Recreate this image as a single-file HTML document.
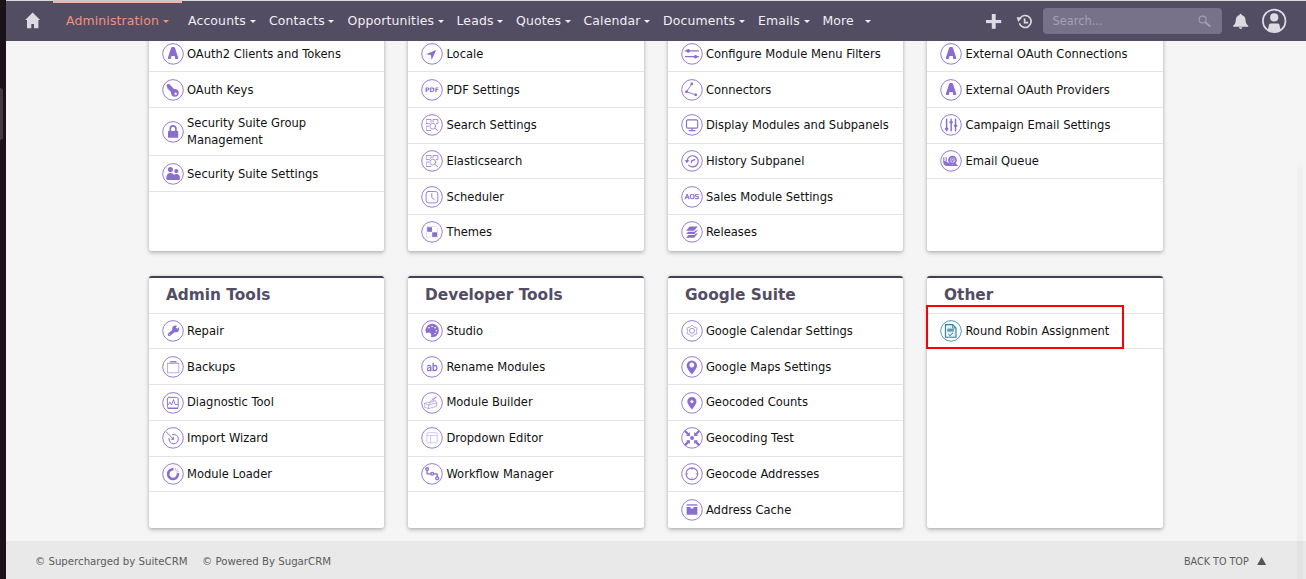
<!DOCTYPE html>
<html><head><meta charset="utf-8"><title>Administration</title>
<style>
*{box-sizing:border-box;margin:0;padding:0}
html,body{width:1306px;height:579px;overflow:hidden;background:#f5f5f5;font-family:"DejaVu Sans","Liberation Sans",sans-serif;color:#111}
.abs{position:absolute}
#strip{left:0;top:0;width:6px;height:579px;background:#1b1118;z-index:5}
#strip i{position:absolute;left:0;top:88px;width:3px;height:52px;background:#433a41;border-radius:0 3px 3px 0}
#topline{left:6px;top:0;width:1300px;height:1px;background:#d9d9d7;z-index:5}
#topline i{position:absolute;left:47px;top:0;width:129px;height:1px;background:#c5cccc}
#nav{left:6px;top:1px;width:1300px;height:40px;background:#534d64;color:#f0eff3;font-size:12.44px;letter-spacing:.135px;z-index:4}
#nav .pink{position:absolute;left:47px;top:0;width:129px;height:2px;background:#fbb0a3}
#nav span.m{position:absolute;top:1px;line-height:38px;white-space:nowrap}
#nav span.m.act{color:#f39079}
#nav i.c{position:absolute;top:18.5px;width:0;height:0;border-left:3px solid transparent;border-right:3px solid transparent;border-top:3.4px solid #f0eff3}
#nav i.c.act{border-top-color:#f39079}
#nav svg{position:absolute}
#search{position:absolute;left:1037px;top:7px;width:179px;height:26px;border-radius:4px;background:#77718a;color:#a5a0b3;font-size:11.4px;letter-spacing:0;line-height:27px;padding-left:9.5px}
.card{position:absolute;background:#fff;border-radius:2.5px;box-shadow:0 2px 4px rgba(0,0,0,.23),0 0 3px rgba(0,0,0,.13);z-index:1}
.card.h{border-top:2px solid #443f59;border-radius:2.5px}
.card h2{position:absolute;left:17px;top:5px;font-size:15.35px;font-weight:bold;color:#534d64;line-height:24px;white-space:nowrap}
.row{position:absolute;left:0;right:0;border-bottom:1px solid #e1e5ea;display:flex;align-items:center;padding-left:13px;font-size:11.53px;white-space:nowrap}
.row.nb{border-bottom:0}
.row.t{white-space:normal;line-height:17px}
.row svg{width:22px;height:22px;flex:none;margin-right:3.4px;position:relative;top:.5px}
.c0 .row svg{margin-right:3px}.c2 .row svg{margin-right:2.9px}
.row svg.tx{will-change:transform}
.hl{position:absolute;border-bottom:1px solid #e1e5ea;left:0;right:0;height:1px}
#red{left:926px;top:305px;width:198px;height:44px;border:2px solid #f00;z-index:3}
#sb{left:1297px;top:167px;width:6px;height:412px;background:rgba(0,0,0,.022);border-radius:3px 3px 0 0;z-index:6}
#footer{left:6px;top:541px;width:1300px;height:38px;background:#e9e9e9;color:#5c5c5c;font-size:10.2px;z-index:2}
#footer span{position:absolute;top:2px;line-height:38px;white-space:nowrap}
</style></head><body>
<div id="strip" class="abs"><i></i></div>
<div id="topline" class="abs"><i></i></div>
<div id="nav" class="abs">
<div class="pink"></div>
<svg style="left:0;top:0" width="60" height="40" viewBox="6 1 60 40"><path fill="#dddbe2" d="M32.6 12.6 L40.1 20 L38.4 20 L38.4 28.2 L34 28.2 L34 23.9 L31.3 23.9 L31.3 28.2 L27 28.2 L27 20 L25.2 20 Z"/></svg>
<span class="m act" style="left:60px">Administration</span><i class="c act" style="left:157.3px"></i>
<span class="m" style="left:182px">Accounts</span><i class="c" style="left:244.0px"></i>
<span class="m" style="left:263px">Contacts</span><i class="c" style="left:322.2px"></i>
<span class="m" style="left:341.5px">Opportunities</span><i class="c" style="left:431.9px"></i>
<span class="m" style="left:450.5px">Leads</span><i class="c" style="left:491.0px"></i>
<span class="m" style="left:510px">Quotes</span><i class="c" style="left:559.1px"></i>
<span class="m" style="left:577.5px">Calendar</span><i class="c" style="left:637.9px"></i>
<span class="m" style="left:657px">Documents</span><i class="c" style="left:733.0px"></i>
<span class="m" style="left:752px">Emails</span><i class="c" style="left:798.0px"></i>
<span class="m" style="left:816.5px">More</span><i class="c" style="left:859.0px"></i>
<svg style="left:970px;top:0" width="80" height="40" viewBox="976 1 80 40">
<rect x="986" y="20" width="15.2" height="3.1" fill="#dddbe2"/><rect x="991.8" y="14" width="3.9" height="14.8" fill="#dddbe2"/>
<path d="M1020.3 17.9 A6 6 0 1 1 1019.4 23.2" fill="none" stroke="#dddbe2" stroke-width="1.6"/>
<path d="M1016.7 16.9 L1021.9 17.7 L1018.2 21.9 Z" fill="#dddbe2"/>
<path d="M1024.6 18.6 L1024.6 22.6 L1028.2 22.6" fill="none" stroke="#dddbe2" stroke-width="1.7"/>
</svg>
<div id="search">Search...</div>
<svg style="left:1184px;top:0" width="116" height="40" viewBox="1190 1 116 40">
<circle cx="1202.6" cy="19.6" r="3.5" fill="none" stroke="#a39eb1" stroke-width="1.1"/><path d="M1205.3 22.2 L1209.8 26" stroke="#a39eb1" stroke-width="1.9" stroke-linecap="round"/>
<path fill="#dddbe2" d="M1240.6 13.7 Q1241.6 13.7 1241.7 14.9 Q1245.3 15.9 1245.5 20 Q1245.7 24.2 1248.2 25.6 L1248.2 26.7 L1233.2 26.7 L1233.2 25.6 Q1235.6 24.2 1235.8 20 Q1236 15.9 1239.5 14.9 Q1239.6 13.7 1240.6 13.7 Z M1238.9 27.3 L1242.4 27.3 Q1242.2 29 1240.6 29 Q1239.1 29 1238.9 27.3 Z"/>
<defs><clipPath id="uc"><circle cx="1274.2" cy="20.9" r="11"/></clipPath></defs>
<circle cx="1274.2" cy="20.9" r="11.3" fill="none" stroke="#dddbe2" stroke-width="1.7"/>
<circle cx="1274.2" cy="17.4" r="4.1" fill="#dddbe2"/>
<path clip-path="url(#uc)" fill="#dddbe2" d="M1270.6 23.4 L1277.8 23.4 Q1279 23.4 1279.3 24.6 L1281.6 34 L1266.8 34 L1269.1 24.6 Q1269.4 23.4 1270.6 23.4 Z"/>
</svg>
</div>
<div class="card c0" style="left:149px;top:20px;width:235px;height:231px">
<div class="row " style="top:16px;height:36px"><svg viewBox="0 0 22 22" width="22" height="22"><circle cx="11" cy="10.9" r="10.3" fill="#fff" stroke="#8a6dd0" stroke-width=".9"/><g fill="#8a6dd0" stroke="none"><path d="M8.9 5.4 Q9.3 4.1 10.4 4.1 L11.7 4.1 Q12.8 4.1 13.2 5.4 L16.2 14.7 Q16.6 16.1 15.2 16.1 L14.3 16.1 Q13.3 16.1 13.1 15.2 L12.7 13.1 L9.4 13.1 L9 15.2 Q8.8 16.1 7.8 16.1 L6.9 16.1 Q5.5 16.1 5.9 14.7 Z"/></g></svg><span>OAuth2 Clients and Tokens</span></div>
<div class="row " style="top:52px;height:36px"><svg viewBox="0 0 22 22" width="22" height="22"><circle cx="11" cy="10.9" r="10.3" fill="#fff" stroke="#8a6dd0" stroke-width=".9"/><g fill="#8a6dd0" stroke="none"><path fill-rule="evenodd" d="M4.5 6.4 Q5.4 4.3 7.6 5.2 L12 10 A3.9 3.9 0 1 1 9 13.4 L8.6 12.2 L7.5 12.2 L7.6 10.8 L6.3 10.9 L6.4 9.5 L5.1 9.5 L5.2 8.2 Z M13.6 13.5 A1.2 1.2 0 1 0 13.6 15.9 A1.2 1.2 0 1 0 13.6 13.5 Z"/></g></svg><span>OAuth Keys</span></div>
<div class="row t" style="top:88px;height:48px"><svg viewBox="0 0 22 22" width="22" height="22"><circle cx="11" cy="10.9" r="10.3" fill="#fff" stroke="#8a6dd0" stroke-width=".9"/><g fill="#8a6dd0" stroke="none"><path d="M6 10.6 Q6 10 6.6 10 L15.6 10 Q16.2 10 16.2 10.6 L16.2 16.2 Q16.2 16.8 15.6 16.8 L6.6 16.8 Q6 16.8 6 16.2 Z"/><path d="M8.3 10.2 L8.3 7.6 A2.8 2.8 0 0 1 13.9 7.6 L13.9 10.2" fill="none" stroke="#8a6dd0" stroke-width="1.7"/></g></svg><span>Security Suite Group<br>Management</span></div>
<div class="row " style="top:136px;height:36px"><svg viewBox="0 0 22 22" width="22" height="22"><circle cx="11" cy="10.9" r="10.3" fill="#fff" stroke="#8a6dd0" stroke-width=".9"/><g fill="#8a6dd0" stroke="none"><circle cx="8.4" cy="6.5" r="2.55"/><circle cx="14.3" cy="8.1" r="2.05"/><path d="M4.3 15.6 Q4.3 10.1 8.4 10.1 Q11 10.1 12.1 11.8 Q13 11.1 14.3 11.1 Q18 11.1 18 15.6 Q18 16.9 16.8 16.9 L5.5 16.9 Q4.3 16.9 4.3 15.6 Z"/></g></svg><span>Security Suite Settings</span></div>
</div>
<div class="card c1" style="left:408px;top:20px;width:236px;height:231px">
<div class="row " style="top:16px;height:36px"><svg viewBox="0 0 22 22" width="22" height="22"><circle cx="11" cy="10.9" r="10.3" fill="#fff" stroke="#8a6dd0" stroke-width=".9"/><g fill="#8a6dd0" stroke="none"><path d="M15.2 6.9 L4.9 11.2 L9.9 12 L10.6 16.9 Z"/></g></svg><span>Locale</span></div>
<div class="row " style="top:52px;height:36px"><svg class="tx" viewBox="0 0 22 22" width="22" height="22"><circle cx="11" cy="10.9" r="10.3" fill="#fff" stroke="#8a6dd0" stroke-width=".9"/><g fill="#8a6dd0" stroke="none"><text x="11" y="13.3" font-family="DejaVu Sans,sans-serif" font-weight="bold" font-size="6.3" text-anchor="middle" textLength="14.2" lengthAdjust="spacingAndGlyphs" fill="#8a6dd0">PDF</text></g></svg><span>PDF Settings</span></div>
<div class="row " style="top:88px;height:36px"><svg style="top:-0.6000000000000001px;left:0px" viewBox="0 0 22 22" width="22" height="22"><circle cx="11" cy="10.9" r="10.3" fill="#fff" stroke="#8a6dd0" stroke-width=".9"/><g fill="#8a6dd0" stroke="none"><g fill="none" stroke="#8a6dd0" stroke-width="0.8" stroke-linecap="round" stroke-linejoin="round" opacity=".9"><rect x="5.5" y="5.5" width="4.5" height="4.1"/><rect x="12.4" y="5.5" width="4.5" height="4.1"/><rect x="5.5" y="12.2" width="4.5" height="4.3"/><circle cx="11.8" cy="12.2" r="3.9" fill="#fff" stroke="none"/><circle cx="11.8" cy="12.2" r="2.9" fill="#fff" stroke-width=".75"/><path d="M14 14.3 L16.7 16.8"/></g></g></svg><span style="position:relative;top:-1px">Search Settings</span></div>
<div class="row " style="top:124px;height:35px"><svg style="top:-0.4px;left:0px" viewBox="0 0 22 22" width="22" height="22"><circle cx="11" cy="10.9" r="10.3" fill="#fff" stroke="#8a6dd0" stroke-width=".9"/><g fill="#8a6dd0" stroke="none"><g fill="none" stroke="#8a6dd0" stroke-width="0.8" stroke-linecap="round" stroke-linejoin="round" opacity=".9"><rect x="5.5" y="5.5" width="4.5" height="4.1"/><rect x="12.4" y="5.5" width="4.5" height="4.1"/><rect x="5.5" y="12.2" width="4.5" height="4.3"/><circle cx="11.8" cy="12.2" r="3.9" fill="#fff" stroke="none"/><circle cx="11.8" cy="12.2" r="2.9" fill="#fff" stroke-width=".75"/><path d="M14 14.3 L16.7 16.8"/></g></g></svg><span>Elasticsearch</span></div>
<div class="row " style="top:159px;height:36px"><svg viewBox="0 0 22 22" width="22" height="22"><circle cx="11" cy="10.9" r="10.3" fill="#fff" stroke="#8a6dd0" stroke-width=".9"/><g fill="#8a6dd0" stroke="none"><g fill="none" stroke="#8a6dd0" stroke-width="0.85" stroke-linecap="round" stroke-linejoin="round"><rect x="5.1" y="5.5" width="11.7" height="11.4" rx="2.2"/><path d="M10.8 7.7 L10.8 11.6 L13.3 13.5"/></g></g></svg><span>Scheduler</span></div>
<div class="row nb" style="top:195px;height:36px"><svg style="top:-0.8px;left:0px" viewBox="0 0 22 22" width="22" height="22"><circle cx="11" cy="10.9" r="10.3" fill="#fff" stroke="#8a6dd0" stroke-width=".9"/><g fill="#8a6dd0" stroke="none"><rect x="5.7" y="5.7" width="10.5" height="10.3" fill="#fff" stroke="#d9cff3" stroke-width=".6"/><rect x="6.2" y="6.2" width="4.8" height="4.6"/><rect x="11.2" y="11.3" width="4.9" height="4.6"/></g></svg><span style="position:relative;top:-1px">Themes</span></div>
</div>
<div class="card c2" style="left:668px;top:20px;width:235px;height:231px">
<div class="row " style="top:16px;height:36px"><svg viewBox="0 0 22 22" width="22" height="22"><circle cx="11" cy="10.9" r="10.3" fill="#fff" stroke="#8a6dd0" stroke-width=".9"/><g fill="#8a6dd0" stroke="none"><path d="M4.4 7.9 L17.4 7.9 M4.4 13.7 L17.4 13.7" fill="none" stroke="#8a6dd0" stroke-width="1.3" stroke-linecap="round" stroke-linejoin="round"/><circle cx="7.2" cy="7.9" r="1.8"/><circle cx="14.5" cy="13.7" r="1.8"/></g></svg><span>Configure Module Menu Filters</span></div>
<div class="row " style="top:52px;height:36px"><svg viewBox="0 0 22 22" width="22" height="22"><circle cx="11" cy="10.9" r="10.3" fill="#fff" stroke="#8a6dd0" stroke-width=".9"/><g fill="#8a6dd0" stroke="none"><path d="M10.8 4.9 L5.5 12.8 L14.7 15.8" fill="none" stroke="#8a6dd0" stroke-width="0.9" stroke-linecap="round" stroke-linejoin="round"/><circle cx="10.8" cy="4.9" r="1.4"/><circle cx="5.5" cy="12.8" r="1.4"/><circle cx="14.7" cy="15.8" r="1.4"/></g></svg><span>Connectors</span></div>
<div class="row " style="top:88px;height:36px"><svg style="top:-0.6000000000000001px;left:0px" viewBox="0 0 22 22" width="22" height="22"><circle cx="11" cy="10.9" r="10.3" fill="#fff" stroke="#8a6dd0" stroke-width=".9"/><g fill="#8a6dd0" stroke="none"><g fill="none" stroke="#8a6dd0" stroke-width="1.1" stroke-linecap="round" stroke-linejoin="round"><rect x="5.5" y="5.9" width="11.2" height="8.2" rx="1.3"/><path d="M11.1 14.3 L11.1 16.5 M8.2 16.6 L14 16.6"/></g></g></svg><span style="position:relative;top:-1px">Display Modules and Subpanels</span></div>
<div class="row " style="top:124px;height:35px"><svg style="top:-0.4px;left:0px" viewBox="0 0 22 22" width="22" height="22"><circle cx="11" cy="10.9" r="10.3" fill="#fff" stroke="#8a6dd0" stroke-width=".9"/><g fill="#8a6dd0" stroke="none"><g fill="none" stroke="#8a6dd0" stroke-width="1.15" stroke-linecap="round" stroke-linejoin="round"><path d="M6.1 10.6 A5.6 5.6 0 1 1 7.6 15.2"/><path d="M10.4 12.6 L10.9 10.7 L13.8 9.7" stroke-width="1.3"/></g><path d="M3.9 10 L8.4 10.3 L5.7 13.2 Z"/></g></svg><span>History Subpanel</span></div>
<div class="row " style="top:159px;height:36px"><svg class="tx" viewBox="0 0 22 22" width="22" height="22"><circle cx="11" cy="10.9" r="10.3" fill="#fff" stroke="#8a6dd0" stroke-width=".9"/><g fill="#8a6dd0" stroke="none"><text x="11" y="13.45" font-family="DejaVu Sans,sans-serif" font-size="6.6" text-anchor="middle" textLength="14.4" lengthAdjust="spacingAndGlyphs" fill="#8a6dd0" stroke="#8a6dd0" stroke-width=".4">AOS</text></g></svg><span>Sales Module Settings</span></div>
<div class="row nb" style="top:195px;height:36px"><svg style="top:-0.8px;left:0px" viewBox="0 0 22 22" width="22" height="22"><circle cx="11" cy="10.9" r="10.3" fill="#fff" stroke="#8a6dd0" stroke-width=".9"/><g fill="#8a6dd0" stroke="none"><path d="M8.7 5.5 L16.7 5.5 L13.1 9.8 L5 9.8 Z"/><path d="M14.9 9.3 L16.7 9.3 L13.2 13.1 L5 13.1 L7.2 10.8 L13.4 10.8 Z"/><path d="M14.9 12.6 L16.7 12.6 L13.2 16.7 L5 16.7 L7.4 14.1 L13.4 14.1 Z"/></g></svg><span style="position:relative;top:-1px">Releases</span></div>
</div>
<div class="card c3" style="left:927px;top:20px;width:236px;height:231px">
<div class="row " style="top:16px;height:36px"><svg viewBox="0 0 22 22" width="22" height="22"><circle cx="11" cy="10.9" r="10.3" fill="#fff" stroke="#8a6dd0" stroke-width=".9"/><g fill="#8a6dd0" stroke="none"><path d="M8.9 5.4 Q9.3 4.1 10.4 4.1 L11.7 4.1 Q12.8 4.1 13.2 5.4 L16.2 14.7 Q16.6 16.1 15.2 16.1 L14.3 16.1 Q13.3 16.1 13.1 15.2 L12.7 13.1 L9.4 13.1 L9 15.2 Q8.8 16.1 7.8 16.1 L6.9 16.1 Q5.5 16.1 5.9 14.7 Z"/></g></svg><span>External OAuth Connections</span></div>
<div class="row " style="top:52px;height:36px"><svg viewBox="0 0 22 22" width="22" height="22"><circle cx="11" cy="10.9" r="10.3" fill="#fff" stroke="#8a6dd0" stroke-width=".9"/><g fill="#8a6dd0" stroke="none"><path d="M8.9 5.4 Q9.3 4.1 10.4 4.1 L11.7 4.1 Q12.8 4.1 13.2 5.4 L16.2 14.7 Q16.6 16.1 15.2 16.1 L14.3 16.1 Q13.3 16.1 13.1 15.2 L12.7 13.1 L9.4 13.1 L9 15.2 Q8.8 16.1 7.8 16.1 L6.9 16.1 Q5.5 16.1 5.9 14.7 Z"/></g></svg><span>External OAuth Providers</span></div>
<div class="row " style="top:88px;height:36px"><svg style="top:-0.6000000000000001px;left:0px" viewBox="0 0 22 22" width="22" height="22"><circle cx="11" cy="10.9" r="10.3" fill="#fff" stroke="#8a6dd0" stroke-width=".9"/><g fill="#8a6dd0" stroke="none"><path d="M6.6 5.3 L6.6 16.8 M11.15 5.3 L11.15 16.8 M15.55 5.3 L15.55 16.8" fill="none" stroke="#8a6dd0" stroke-width="1.45" stroke-linecap="round" stroke-linejoin="round"/><rect x="4.9" y="13.8" width="3.4" height="2" rx=".6"/><rect x="9.45" y="7.2" width="3.4" height="2" rx=".6"/><rect x="13.85" y="10.8" width="3.4" height="2" rx=".6"/></g></svg><span style="position:relative;top:-1px">Campaign Email Settings</span></div>
<div class="row " style="top:124px;height:35px"><svg style="top:-0.4px;left:0px" viewBox="0 0 22 22" width="22" height="22"><circle cx="11" cy="10.9" r="10.3" fill="#fff" stroke="#8a6dd0" stroke-width=".9"/><g fill="#8a6dd0" stroke="none"><path d="M3.8 7.3 L3.8 11.4 M6.2 7.3 L6.2 11.6" fill="none" stroke="#8a6dd0" stroke-width="1.05"/><path d="M3.2 11.1 L3.2 12 Q3.4 15.9 7.4 15.9 L18 15.9 L15.9 13.3 Q14.5 14.5 12.5 14.4 Q10 14.4 8.6 12.7 L4.6 11.1 Z"/><circle cx="12.5" cy="10.05" r="4.35"/><circle cx="12.6" cy="10.2" r="2.7" fill="#cbbfee"/><path d="M11.6 11.2 A1.5 1.5 0 1 1 13.9 10.6 M12.9 9.9 L12.2 12.6" fill="none" stroke="#8a6dd0" stroke-width=".8"/></g></svg><span>Email Queue</span></div>
</div>
<div class="card h c0" style="left:149px;top:276px;width:235px;height:252px">
<h2>Admin Tools</h2><div class="hl" style="top:35px"></div>
<div class="row " style="top:36px;height:35px"><svg style="top:0.3px;left:0px" viewBox="0 0 22 22" width="22" height="22"><circle cx="11" cy="10.9" r="10.3" fill="#fff" stroke="#8a6dd0" stroke-width=".9"/><g fill="#8a6dd0" stroke="none"><circle cx="13.6" cy="8.9" r="3.4"/><path d="M7.3 14.5 L12.8 9.9" stroke="#8a6dd0" stroke-width="3.1" stroke-linecap="round"/><path d="M14.5 8 L17.8 4.7" stroke="#fff" stroke-width="2.1"/><circle cx="7.5" cy="14.3" r=".55" fill="#fff" opacity=".7"/></g></svg><span>Repair</span></div>
<div class="row " style="top:71px;height:36px"><svg style="top:0.7px;left:0px" viewBox="0 0 22 22" width="22" height="22"><circle cx="11" cy="10.9" r="10.3" fill="#fff" stroke="#8a6dd0" stroke-width=".9"/><g fill="#8a6dd0" stroke="none"><path d="M8 5.6 L14.4 5.6 L16.8 7.4 L5.4 7.4 Z" opacity=".35"/><rect x="5.4" y="7.4" width="11.4" height="9.4" fill="none" stroke="#8a6dd0" stroke-width=".8" opacity=".7"/><path d="M8.2 5.6 L14.2 5.6" stroke="#8a6dd0" stroke-width="1.2" opacity=".9"/></g></svg><span>Backups</span></div>
<div class="row " style="top:107px;height:36px"><svg style="top:0.3px;left:0px" viewBox="0 0 22 22" width="22" height="22"><circle cx="11" cy="10.9" r="10.3" fill="#fff" stroke="#8a6dd0" stroke-width=".9"/><g fill="#8a6dd0" stroke="none"><g fill="none" stroke="#8a6dd0" stroke-width="0.95" stroke-linecap="round" stroke-linejoin="round"><rect x="5.4" y="5.4" width="10.8" height="10.8" rx="1.5"/><path d="M6.1 16.4 L15.5 16.4" stroke-width="1.1"/><path d="M6.5 12.6 L8 10.2 L9.6 13 L11.5 7.6 L13.1 12.5 L15.4 12.5" stroke-width=".9"/></g></g></svg><span style="position:relative;top:-1px">Diagnostic Tool</span></div>
<div class="row " style="top:143px;height:36px"><svg style="top:-0.30000000000000004px;left:0px" viewBox="0 0 22 22" width="22" height="22"><circle cx="11" cy="10.9" r="10.3" fill="#fff" stroke="#8a6dd0" stroke-width=".9"/><g fill="#8a6dd0" stroke="none"><g fill="none" stroke="#8a6dd0" stroke-width="1" stroke-linecap="round" stroke-linejoin="round"><path d="M10.5 7.5 A4.7 4.7 0 1 1 7 11.4"/><path d="M4.5 5.2 L11 11.7"/></g><path d="M12 9.4 L12 12.7 L8.7 12.7 Z"/></g></svg><span style="position:relative;top:-1px">Import Wizard</span></div>
<div class="row " style="top:179px;height:35px"><svg style="top:0.3px;left:0px" viewBox="0 0 22 22" width="22" height="22"><circle cx="11" cy="10.9" r="10.3" fill="#fff" stroke="#8a6dd0" stroke-width=".9"/><g fill="#8a6dd0" stroke="none"><path d="M11.48 6.27 A4.9 4.9 0 1 0 15.84 10.13" fill="none" stroke="#8a6dd0" stroke-width="2.6"/><path d="M12.9 7.1 L13.6 5.5 M14.2 8 L15.4 6.7 M15 9.1 L16.5 8.3" fill="none" stroke="#8a6dd0" stroke-width="0.7" stroke-linecap="round" stroke-linejoin="round" opacity=".8"/></g></svg><span>Module Loader</span></div>
</div>
<div class="card h c1" style="left:408px;top:276px;width:236px;height:252px">
<h2>Developer Tools</h2><div class="hl" style="top:35px"></div>
<div class="row " style="top:36px;height:35px"><svg style="top:0.3px;left:0px" viewBox="0 0 22 22" width="22" height="22"><circle cx="11" cy="10.9" r="10.3" fill="#fff" stroke="#8a6dd0" stroke-width=".9"/><g fill="#8a6dd0" stroke="none"><circle cx="11.2" cy="10.5" r="6.7"/><circle cx="7.3" cy="15.3" r="2.9" fill="#fff"/><g fill="#fff"><ellipse cx="8" cy="7.7" rx=".85" ry=".7"/><ellipse cx="11.1" cy="6.5" rx=".85" ry=".7"/><ellipse cx="14.1" cy="7.7" rx=".85" ry=".7"/><ellipse cx="15.4" cy="10.7" rx=".85" ry=".7"/><ellipse cx="14.1" cy="13.6" rx=".85" ry=".7"/></g></g></svg><span>Studio</span></div>
<div class="row " style="top:71px;height:36px"><svg style="top:0.7px;left:0px" class="tx" viewBox="0 0 22 22" width="22" height="22"><circle cx="11" cy="10.9" r="10.3" fill="#fff" stroke="#8a6dd0" stroke-width=".9"/><g fill="#8a6dd0" stroke="none"><text x="11" y="14.6" font-family="DejaVu Sans,sans-serif" font-size="10.6" text-anchor="middle" textLength="11.2" lengthAdjust="spacingAndGlyphs" fill="#8a6dd0" stroke="#8a6dd0" stroke-width=".45">ab</text></g></svg><span>Rename Modules</span></div>
<div class="row " style="top:107px;height:36px"><svg style="top:0.3px;left:0px" viewBox="0 0 22 22" width="22" height="22"><circle cx="11" cy="10.9" r="10.3" fill="#fff" stroke="#8a6dd0" stroke-width=".9"/><g fill="#8a6dd0" stroke="none"><g fill="none" stroke="#8a6dd0" stroke-width="0.7" stroke-linecap="round" stroke-linejoin="round" opacity=".75"><path d="M3.6 11.5 L7.4 12.9 L7.4 16.6 L3.6 15.1 Z"/><path d="M7.4 12.9 L15.7 11 L15.7 14.2 L7.4 16.6"/><path d="M3.6 11.5 L6.6 10.3 L9 11 M15.7 11 L14.6 8.6 L12.8 9"/><path d="M15.2 5 L11.8 7.6" stroke-width="1.2"/><path d="M11.6 7.7 L8 10.6 L12.6 9.4 Z"/></g></g></svg><span style="position:relative;top:-1px">Module Builder</span></div>
<div class="row " style="top:143px;height:36px"><svg style="top:-0.30000000000000004px;left:0px" viewBox="0 0 22 22" width="22" height="22"><circle cx="11" cy="10.9" r="10.3" fill="#fff" stroke="#8a6dd0" stroke-width=".9"/><g fill="#8a6dd0" stroke="none"><g fill="none" stroke="#8a6dd0" stroke-width=".65" opacity=".55"><rect x="5.9" y="5.7" width="10.3" height="10.1" rx=".6"/><path d="M5.9 8.6 L16.2 8.6 M9.5 8.6 L9.5 15.8"/></g></g></svg><span style="position:relative;top:-1px">Dropdown Editor</span></div>
<div class="row " style="top:179px;height:35px"><svg style="top:0.3px;left:0px" viewBox="0 0 22 22" width="22" height="22"><circle cx="11" cy="10.9" r="10.3" fill="#fff" stroke="#8a6dd0" stroke-width=".9"/><g fill="#8a6dd0" stroke="none"><g fill="none" stroke="#8a6dd0" stroke-width="1.3" stroke-linecap="round" stroke-linejoin="round"><path d="M6.1 7.4 L6.1 10.8 L9.8 10.8 M12.6 10.8 L16.2 10.8 L16.2 13.8"/><circle cx="6.1" cy="6.1" r="1.35"/><circle cx="11.2" cy="10.8" r="1.4"/><circle cx="16.2" cy="15.3" r="1.5"/></g></g></svg><span>Workflow Manager</span></div>
</div>
<div class="card h c2" style="left:668px;top:276px;width:235px;height:252px">
<h2>Google Suite</h2><div class="hl" style="top:35px"></div>
<div class="row " style="top:36px;height:35px"><svg style="top:0.3px;left:0px" viewBox="0 0 22 22" width="22" height="22"><circle cx="11" cy="10.9" r="10.3" fill="#fff" stroke="#8a6dd0" stroke-width=".9"/><g fill="#8a6dd0" stroke="none"><g fill="none" stroke="#8a6dd0" stroke-width=".8" opacity=".9"><path d="M11.00 5.30 L11.47 5.40 L11.90 5.68 L12.27 6.07 L12.57 6.48 L12.85 6.83 L13.15 7.08 L13.51 7.21 L13.96 7.28 L14.46 7.34 L14.98 7.46 L15.44 7.69 L15.76 8.05 L15.91 8.51 L15.89 9.02 L15.73 9.53 L15.53 10.00 L15.36 10.42 L15.30 10.80 L15.36 11.18 L15.53 11.60 L15.73 12.07 L15.89 12.58 L15.91 13.09 L15.76 13.55 L15.44 13.91 L14.98 14.14 L14.46 14.26 L13.96 14.32 L13.51 14.39 L13.15 14.52 L12.85 14.77 L12.57 15.12 L12.27 15.53 L11.90 15.92 L11.47 16.20 L11.00 16.30 L10.53 16.20 L10.10 15.92 L9.73 15.53 L9.43 15.12 L9.15 14.77 L8.85 14.52 L8.49 14.39 L8.04 14.32 L7.54 14.26 L7.02 14.14 L6.56 13.91 L6.24 13.55 L6.09 13.09 L6.11 12.58 L6.27 12.07 L6.47 11.60 L6.64 11.18 L6.70 10.80 L6.64 10.42 L6.47 10.00 L6.27 9.53 L6.11 9.02 L6.09 8.51 L6.24 8.05 L6.56 7.69 L7.02 7.46 L7.54 7.34 L8.04 7.28 L8.49 7.21 L8.85 7.08 L9.15 6.83 L9.43 6.48 L9.73 6.07 L10.10 5.68 L10.53 5.40 L11.00 5.30 Z"/><circle cx="11" cy="10.8" r="2.5"/></g></g></svg><span>Google Calendar Settings</span></div>
<div class="row " style="top:71px;height:36px"><svg style="top:0.7px;left:0px" viewBox="0 0 22 22" width="22" height="22"><circle cx="11" cy="10.9" r="10.3" fill="#fff" stroke="#8a6dd0" stroke-width=".9"/><g fill="#8a6dd0" stroke="none"><path fill-rule="evenodd" d="M10.8 4.4 A5.2 5.2 0 0 1 16 9.6 Q16 12.6 10.8 18.6 Q5.6 12.6 5.6 9.6 A5.2 5.2 0 0 1 10.8 4.4 Z M10.8 6.6 a2.4 2.4 0 1 0 0.01 0 Z"/></g></svg><span>Google Maps Settings</span></div>
<div class="row " style="top:107px;height:36px"><svg style="top:0.3px;left:0px" viewBox="0 0 22 22" width="22" height="22"><circle cx="11" cy="10.9" r="10.3" fill="#fff" stroke="#8a6dd0" stroke-width=".9"/><g fill="#8a6dd0" stroke="none"><path fill-rule="evenodd" d="M10.9 5 A4.6 4.6 0 0 1 15.5 9.6 Q15.5 12.4 10.9 17.4 Q6.3 12.4 6.3 9.6 A4.6 4.6 0 0 1 10.9 5 Z M10.9 7.4 L11.5 8.8 L13 8.9 L11.9 9.9 L12.3 11.4 L10.9 10.6 L9.5 11.4 L9.9 9.9 L8.8 8.9 L10.3 8.8 Z"/></g></svg><span style="position:relative;top:-1px">Geocoded Counts</span></div>
<div class="row " style="top:143px;height:36px"><svg style="top:-0.30000000000000004px;left:0px" viewBox="0 0 22 22" width="22" height="22"><circle cx="11" cy="10.9" r="10.3" fill="#fff" stroke="#8a6dd0" stroke-width=".9"/><g fill="#8a6dd0" stroke="none"><path d="M3.75 3.75 L7.25 7.25" fill="none" stroke="#8a6dd0" stroke-width="2.2"/><path d="M8.95 8.95 L5.05 8.95 L8.95 5.05 Z"/><path d="M18.35 3.75 L14.85 7.25" fill="none" stroke="#8a6dd0" stroke-width="2.2"/><path d="M13.15 8.95 L17.05 8.95 L13.15 5.05 Z"/><path d="M3.75 18.35 L7.25 14.85" fill="none" stroke="#8a6dd0" stroke-width="2.2"/><path d="M8.95 13.15 L5.05 13.15 L8.95 17.05 Z"/><path d="M18.35 18.35 L14.85 14.85" fill="none" stroke="#8a6dd0" stroke-width="2.2"/><path d="M13.15 13.15 L17.05 13.15 L13.15 17.05 Z"/><circle cx="11.05" cy="11.05" r="2"/></g></svg><span style="position:relative;top:-1px">Geocoding Test</span></div>
<div class="row " style="top:179px;height:35px"><svg style="top:0.3px;left:0px" viewBox="0 0 22 22" width="22" height="22"><circle cx="11" cy="10.9" r="10.3" fill="#fff" stroke="#8a6dd0" stroke-width=".9"/><g fill="#8a6dd0" stroke="none"><g fill="none" stroke="#8a6dd0" stroke-width="1.1" stroke-linecap="round" stroke-linejoin="round"><circle cx="10.9" cy="10.8" r="5.9"/><path d="M10.9 5.4 L10.9 6.6 M10.9 15 L10.9 16.2 M5.5 10.8 L6.7 10.8 M15.1 10.8 L16.3 10.8" stroke-width=".9"/></g></g></svg><span>Geocode Addresses</span></div>
<div class="row nb" style="top:214px;height:36px"><svg style="top:0.0px;left:0px" viewBox="0 0 22 22" width="22" height="22"><circle cx="11" cy="10.9" r="10.3" fill="#fff" stroke="#8a6dd0" stroke-width=".9"/><g fill="#8a6dd0" stroke="none"><rect x="5.6" y="5.3" width="10.8" height="1.3"/><path d="M5.6 7.9 L9.5 7.9 L9.5 9.5 L12.5 9.5 L12.5 7.9 L16.4 7.9 L16.4 15.7 L5.6 15.7 Z"/></g></svg><span>Address Cache</span></div>
</div>
<div class="card h c3" style="left:927px;top:276px;width:236px;height:252px">
<h2>Other</h2><div class="hl" style="top:35px"></div>
<div class="row " style="top:36px;height:35px"><svg style="top:-0.09999999999999998px;left:0.4px" viewBox="0 0 22 22" width="22" height="22"><circle cx="11" cy="10.9" r="10.3" fill="#fff" stroke="#3d8fa3" stroke-width=".9"/><path d="M5.4 4.6 L12.6 4.6 L16 8 L16 17.3 L5.4 17.3 Z" fill="#e6f2f5" stroke="#2d8198" stroke-width="1.1" stroke-linejoin="round"/><path d="M12.6 4.6 L12.6 8 L16 8" fill="none" stroke="#2d8198" stroke-width=".8"/><rect x="7.2" y="8.6" width="6.6" height="3" fill="#2d8198" opacity=".75"/><path d="M8.4 14.2 L10 15.6 L13 12.9" fill="none" stroke="#2d8198" stroke-width="1"/></svg><span>Round Robin Assignment</span></div>
</div>

<div id="red" class="abs"></div>
<div id="sb" class="abs"></div>
<div id="footer" class="abs">
<span style="left:29px">© Supercharged by SuiteCRM</span>
<span style="left:196px">© Powered By SugarCRM</span>
<span style="left:1178px;font-size:9.6px">BACK TO TOP</span>
<svg style="position:absolute;left:1250px;top:14.5px" width="12" height="10" viewBox="0 0 12 10"><path d="M5.6 1 L10.1 9 L1.1 9 Z" fill="#555"/></svg>
</div>
</body></html>
